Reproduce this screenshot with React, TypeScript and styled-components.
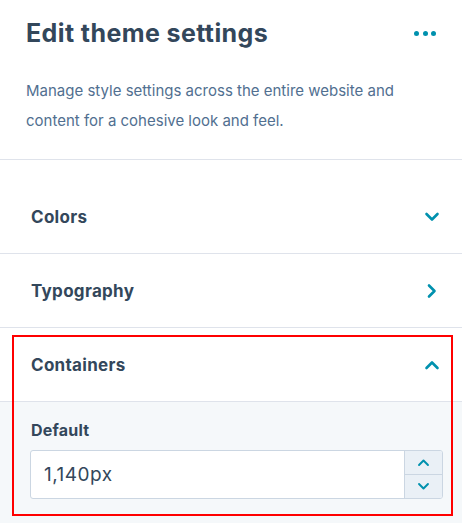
import React from "react";
import styled, { createGlobalStyle } from "styled-components";

const GlobalStyle = createGlobalStyle`
  html, body { margin: 0; padding: 0; background: #ffffff; }
  body { font-family: "Inter", "Noto Sans", sans-serif; color: #33475b; }
  * { box-sizing: border-box; }
`;

const Panel = styled.div`
  position: relative;
  width: 462px;
  height: 523px;
  background: #ffffff;
  overflow: hidden;
`;

const Header = styled.div`
  padding: 16px 26px 0 26px;
  border-bottom: 1px solid #dfe3eb;
  height: 160px;
`;

const TitleRow = styled.div`
  display: flex;
  align-items: center;
  justify-content: space-between;
  height: 34px;
`;

const Title = styled.h1`
  margin: 0;
  font-size: 25px;
  font-weight: 700;
  color: #33475b;
  letter-spacing: 0.4px;
`;

const MoreButton = styled.button`
  border: 0;
  background: transparent;
  padding: 0;
  margin-right: 0;
  display: flex;
  gap: 3.5px;
  cursor: pointer;
`;

const Dot = styled.span`
  width: 5px;
  height: 5px;
  border-radius: 50%;
  background: #0091ae;
`;

const Description = styled.p`
  margin: 26px 0 0 0;
  font-size: 15px;
  line-height: 30px;
  color: #516f90;
`;

const List = styled.div`
  padding-top: 20px;
`;

const Item = styled.div<{ last?: boolean }>`
  border-bottom: ${(p) => (p.last ? "0" : "1px solid #dfe3eb")};
`;

const ItemHeader = styled.div`
  display: flex;
  align-items: center;
  justify-content: space-between;
  height: 73px;
  padding: 0 22px 0 31px;
`;

const ItemTitle = styled.span`
  font-size: 17px;
  font-weight: 700;
  color: #33475b;
  letter-spacing: 0.3px;
`;

const ItemBody = styled.div`
  background: #f5f8fa;
  border-top: 1px solid #dfe3eb;
  padding: 18px 19px 30px 30px;
  min-height: 130px;
`;

const FieldLabel = styled.label`
  display: block;
  font-size: 16px;
  font-weight: 700;
  color: #33475b;
  margin-bottom: 10px;
  margin-left: 1px;
  letter-spacing: 0.2px;
`;

const NumberInput = styled.div`
  display: flex;
  height: 49px;
  border: 1px solid #cbd6e2;
  border-radius: 3px;
  background: #ffffff;
  overflow: hidden;
`;

const InputText = styled.div`
  flex: 1;
  display: flex;
  align-items: center;
  padding-left: 13px;
  font-size: 19px;
  letter-spacing: 0.5px;
  color: #33475b;
`;

const Stepper = styled.div`
  width: 38px;
  display: flex;
  flex-direction: column;
  border-left: 1px solid #cbd6e2;
  background: #eaf0f6;
`;

const StepButton = styled.div<{ bottom?: boolean }>`
  flex: 1;
  display: flex;
  align-items: center;
  justify-content: center;
  border-top: ${(p) => (p.bottom ? "1px solid #cbd6e2" : "0")};
`;

const Highlight = styled.div`
  position: absolute;
  left: 12px;
  top: 335px;
  width: 441px;
  height: 181px;
  border: 2px solid #ff0000;
  pointer-events: none;
`;

type Dir = "down" | "right" | "up";

const Chevron = ({ dir, size = 16, stroke = 2.6 }: { dir: Dir; size?: number; stroke?: number }) => {
  const d =
    dir === "down"
      ? "M2.5 5 L8 10.5 L13.5 5"
      : dir === "up"
      ? "M2.5 11 L8 5.5 L13.5 11"
      : "M5 2.5 L10.5 8 L5 13.5";
  return (
    <svg width={size} height={size} viewBox="0 0 16 16" fill="none">
      <path d={d} stroke="#0091ae" strokeWidth={stroke} strokeLinecap="round" strokeLinejoin="round" />
    </svg>
  );
};

export default function App() {
  return (
    <>
      <GlobalStyle />
      <Panel>
        <Header>
          <TitleRow>
            <Title>Edit theme settings</Title>
            <MoreButton aria-label="More">
              <Dot />
              <Dot />
              <Dot />
            </MoreButton>
          </TitleRow>
          <Description>
            Manage style settings across the entire website and content for a cohesive look and feel.
          </Description>
        </Header>
        <List>
          <Item>
            <ItemHeader>
              <ItemTitle>Colors</ItemTitle>
              <Chevron dir="down" />
            </ItemHeader>
          </Item>
          <Item>
            <ItemHeader>
              <ItemTitle>Typography</ItemTitle>
              <Chevron dir="right" />
            </ItemHeader>
          </Item>
          <Item last>
            <ItemHeader>
              <ItemTitle>Containers</ItemTitle>
              <Chevron dir="up" />
            </ItemHeader>
            <ItemBody>
              <FieldLabel>Default</FieldLabel>
              <NumberInput>
                <InputText>1,140px</InputText>
                <Stepper>
                  <StepButton>
                    <Chevron dir="up" size={13} stroke={2.4} />
                  </StepButton>
                  <StepButton bottom>
                    <Chevron dir="down" size={13} stroke={2.4} />
                  </StepButton>
                </Stepper>
              </NumberInput>
            </ItemBody>
          </Item>
        </List>
        <Highlight />
      </Panel>
    </>
  );
}
